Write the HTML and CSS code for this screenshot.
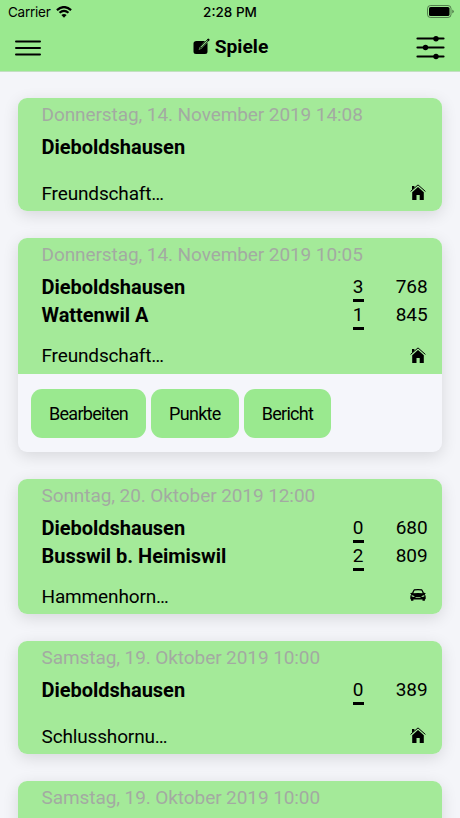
FILE: index.html
```html
<!DOCTYPE html>
<html lang="de">
<head>
<meta charset="utf-8">
<title>Spiele</title>
<link rel="stylesheet" href="styles.css">
</head>
<body>
<svg width="0" height="0" class="defs">
  <symbol id="home" viewBox="0 0 16 16">
    <path d="M2 2h2.400v2L2 6zM8 3l5.800 5.200V16H9.700v-5H6.500v5H2.200V8.200z"/>
    <path d="M.6 7.400 8 .9l7.400 6.500" fill="none" stroke="currentColor" stroke-width="1"/>
  </symbol>
  <symbol id="car" viewBox="0 0 16 12">
    <path fill-rule="evenodd" d="M4 .3Q8-.3 12 .3q1.300 1.500 1.900 3.500l1.400.2.400.8-1 .4q1 1 1 2.500v2.200l-.8.5v1.300h-2.400v-1.300H3.400v1.300H1v-1.300l-.7-.5V7.700q0-1.500 1-2.500l-1-.4.400-.8 1.400-.2Q2.700 1.800 4 .3zM4.600 1.400Q3.800 2.600 3.400 4.200q4.600-.5 9.200 0-.4-1.600-1.200-2.800-3.400-.5-6.800 0zM1.700 6.100v1.300l2.300.5.700-.7zM14.300 6.100l-3 1.100.7.700 2.300-.5zM5.500 7.900v.8h5v-.8z"/>
  </symbol>
</svg>
<header class="header">
  <div class="status">
    <div class="carrier">Carrier
      <svg width="16" height="12" viewBox="0 0 16 12" fill="none" stroke="#000" stroke-width="2.2"><path d="M.9 4.100Q8-2 15.100 4.100M3.500 6.800Q8 2.800 12.500 6.800"/><path d="M8 11.700 5.400 9.100Q8 6.900 10.600 9.100z" fill="#000" stroke="none"/></svg>
    </div>
    <div class="time">2:28 PM</div>
    <svg class="battery" width="28" height="13" viewBox="0 0 28 13"><rect x=".5" y=".5" width="23.500" height="12" rx="3" fill="none" stroke="#000" stroke-opacity=".45"/><rect x="2" y="2" width="20.500" height="9" rx="1.600"/><path d="M25.300 4.500q3 2 0 4z" opacity=".5"/></svg>
  </div>
  <div class="navbar">
    <svg width="26" height="16" viewBox="0 0 26 16" stroke="#000" stroke-width="2" stroke-linecap="round"><path d="M1 1.500h24M1 8h24M1 14.500h24"/></svg>
    <h1 class="title"><svg width="18" height="17" viewBox="0 0 18 17"><path d="M3.500 3H12L6.500 9.500l-.8 2.200 2.200-.8L14.500 4.500v9q0 2.500-2.500 2.500H3Q.5 16 .5 13.500v-8Q.5 3 3.500 3z"/><path d="m6.800 10.600 1-2.300 7.400-7.400 1 1-7.300 7.500z" fill="none" stroke="#000" stroke-width=".8"/><path d="m14 1.900 1.300-1.300 1.300 1.300-1.300 1.300z"/></svg>Spiele</h1>
    <svg width="29" height="24" viewBox="0 0 29 24" stroke="#000" stroke-width="2.2" stroke-linecap="round"><path d="M1.500 2.500h26M1.500 11.500h26M1.500 20.500h26"/><g stroke="none"><circle cx="20" cy="2.700" r="2.700"/><circle cx="9.500" cy="11.500" r="2.700"/><circle cx="20" cy="20.500" r="2.700"/></g></svg>
  </div>
</header>
<main class="games">
  <article class="card">
    <div class="game">
      <div class="date">Donnerstag, 14. November 2019 14:08</div>
      <div class="teams"><div class="team"><b>Dieboldshausen</b></div></div>
      <div class="place"><span>Freundschaft…</span><svg width="16" height="16"><use href="#home"/></svg></div>
    </div>
  </article>
  <article class="card">
    <div class="game double">
      <div class="date">Donnerstag, 14. November 2019 10:05</div>
      <div class="teams">
        <div class="team"><b>Dieboldshausen</b><span class="score">3</span><span class="points">768</span></div>
        <div class="team"><b>Wattenwil A</b><span class="score">1</span><span class="points">845</span></div>
      </div>
      <div class="place"><span>Freundschaft…</span><svg width="16" height="16"><use href="#home"/></svg></div>
    </div>
    <div class="actions"><button>Bearbeiten</button><button>Punkte</button><button>Bericht</button></div>
  </article>
  <article class="card">
    <div class="game double">
      <div class="date">Sonntag, 20. Oktober 2019 12:00</div>
      <div class="teams">
        <div class="team"><b>Dieboldshausen</b><span class="score">0</span><span class="points">680</span></div>
        <div class="team"><b>Busswil b. Heimiswil</b><span class="score">2</span><span class="points">809</span></div>
      </div>
      <div class="place"><span>Hammenhorn…</span><svg width="16" height="12"><use href="#car"/></svg></div>
    </div>
  </article>
  <article class="card">
    <div class="game">
      <div class="date">Samstag, 19. Oktober 2019 10:00</div>
      <div class="teams"><div class="team"><b>Dieboldshausen</b><span class="score">0</span><span class="points">389</span></div></div>
      <div class="place"><span>Schlusshornu…</span><svg width="16" height="16"><use href="#home"/></svg></div>
    </div>
  </article>
  <article class="card">
    <div class="game">
      <div class="date">Samstag, 19. Oktober 2019 10:00</div>
      <div class="teams"></div>
    </div>
  </article>
</main>
</body>
</html>
```
FILE: styles.css
```css
* { box-sizing: border-box; }
body {
  margin: 0;
  height: 818px;
  display: flex;
  flex-direction: column;
  overflow: hidden;
  background: #f4f5f9;
  color: #000;
  font-family: Roboto, sans-serif;
  font-size: 19px;
}
svg { display: block; flex: none; }
.defs { position: absolute; }
.header {
  flex: none;
  height: 72px;
  background: #9ae98f;
  border-bottom: 1px solid #c3dfc2;
}
.status {
  height: 24px;
  padding: 0 5px 0 8px;
  display: grid;
  grid-template-columns: 1fr auto 1fr;
  align-items: center;
  font: 13.5px Inter, sans-serif;
}
.battery, .carrier svg { margin-bottom: 1px; }
.carrier { display: flex; align-items: center; gap: 5px; letter-spacing: -.25px; }
.time { font-weight: 500; padding-right: 3px; }
.battery { justify-self: end; }
.navbar {
  height: 47px;
  padding: 0 15px;
  display: grid;
  grid-template-columns: 1fr auto 1fr;
  align-items: center;
}
.navbar > :last-child { justify-self: end; }
.title {
  margin: 0 0 1px 1px;
  display: flex;
  align-items: center;
  gap: 4px;
  font-size: 19.200px;
  line-height: 22px;
}
.title svg { margin-bottom: 2px; }
.games {
  flex: 1;
  min-height: 0;
  overflow: hidden;
  display: flex;
  flex-direction: column;
  gap: 27px;
  padding: 26px 18px 0;
}
.card {
  flex: none;
  border-radius: 9px;
  overflow: hidden;
  background: #f5f6fb;
  box-shadow: 0 4px 16px rgba(0, 0, 0, .12);
}
.game {
  height: 113px;
  display: flex;
  flex-direction: column;
  padding: 0 14.500px 0 23.500px;
  background: #a4ea99;
}
.double { height: 135.500px; }
.date {
  height: 35px;
  line-height: 34px;
  color: #a3aaa2;
  letter-spacing: -.08px;
}
.teams { flex: 1; min-height: 0; }
.team {
  height: 28px;
  line-height: 28px;
  display: grid;
  grid-template-columns: 1fr 11px 64px;
}
.team b { font-size: 20px; letter-spacing: -.02px; }
.score {
  height: 29px;
  border-bottom: 3px solid #000;
  text-align: center;
}
.points { text-align: right; letter-spacing: -.1px; }
.place {
  height: 36px;
  line-height: 36px;
  display: flex;
  align-items: center;
  justify-content: space-between;
  padding-right: 1.500px;
  letter-spacing: -.15px;
}
.place span { padding-top: 1px; }
.place svg { margin-bottom: 2px; }
.actions {
  height: 78.300px;
  display: flex;
  gap: 5px;
  padding: 15px 13px;
}
.actions button {
  height: 49px;
  padding: 0 18px;
  border: 0;
  border-radius: 11px;
  background: #9ae98f;
  color: #000;
  font: 18px/21px Roboto, sans-serif;
  letter-spacing: -.7px;
}
```
